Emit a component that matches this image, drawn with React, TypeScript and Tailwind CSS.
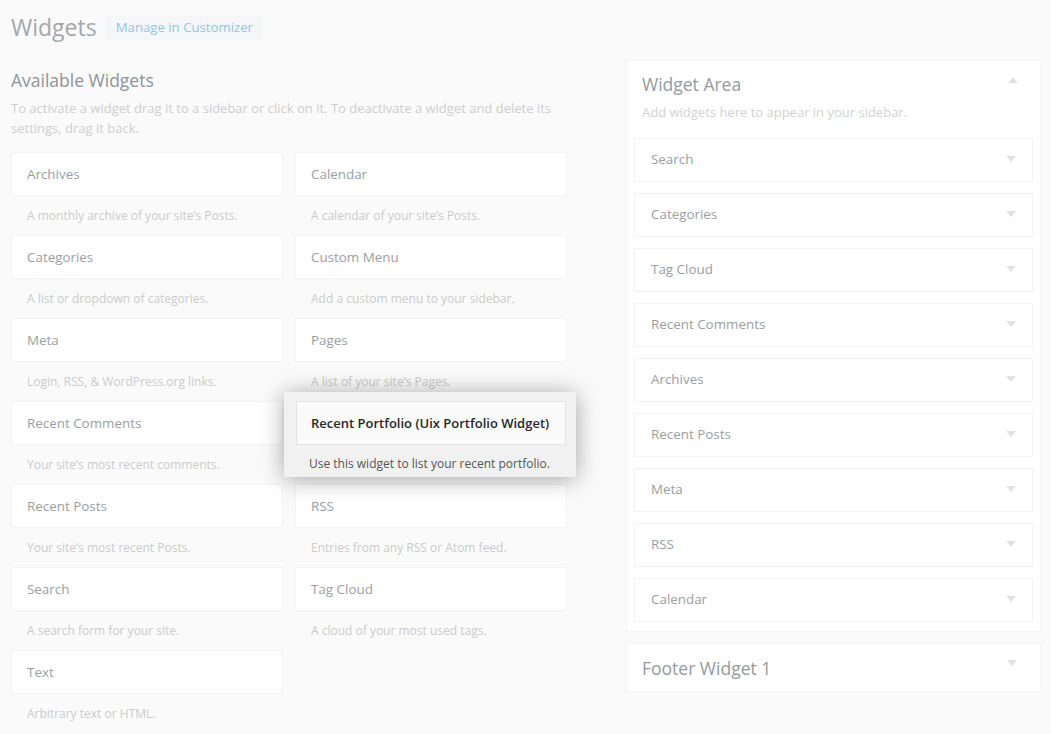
import React from "react";

const left: [string, string][] = [
  ["Archives", "A monthly archive of your site\u2019s Posts."],
  ["Calendar", "A calendar of your site\u2019s Posts."],
  ["Categories", "A list or dropdown of categories."],
  ["Custom Menu", "Add a custom menu to your sidebar."],
  ["Meta", "Login, RSS, & WordPress.org links."],
  ["Pages", "A list of your site\u2019s Pages."],
  ["Recent Comments", "Your site\u2019s most recent comments."],
  ["", ""],
  ["Recent Posts", "Your site\u2019s most recent Posts."],
  ["RSS", "Entries from any RSS or Atom feed."],
  ["Search", "A search form for your site."],
  ["Tag Cloud", "A cloud of your most used tags."],
  ["Text", "Arbitrary text or HTML."],
];

const area = ["Search", "Categories", "Tag Cloud", "Recent Comments", "Archives", "Recent Posts", "Meta", "RSS", "Calendar"];

function Down({ cls = "" }: { cls?: string }) {
  return (
    <svg width="10" height="6" viewBox="0 0 10 6" className={cls}>
      <path d="M0 0 L10 0 L5 6 Z" fill="#e2e2e2" />
    </svg>
  );
}
function Up({ cls = "" }: { cls?: string }) {
  return (
    <svg width="10" height="6" viewBox="0 0 10 6" className={cls}>
      <path d="M0 6 L10 6 L5 0 Z" fill="#e2e2e2" />
    </svg>
  );
}

export default function App() {
  return (
    <div className="relative min-h-[734px] w-[1051px] overflow-hidden bg-[#fafafa] font-['Open_Sans',sans-serif]">
      <div className="flex">
        <div className="ml-[11px] w-[556px] pt-[13px]">
          <div className="flex h-[29px] items-center">
            <h1 className="text-[23px] leading-[29px] text-[#a3a7ab]">Widgets</h1>
            <div className="ml-[10px] flex h-[26px] items-center bg-[#f4f6f7] px-[9px] text-[13.2px] text-[#92c7e3]">
              Manage in Customizer
            </div>
          </div>
          <h2 className="mt-[26px] text-[17.5px] leading-[24px] text-[#8f9499]">Available Widgets</h2>
          <p className="mt-[6px] text-[13px] leading-[20px] text-[#cfcfcf]">
            To activate a widget drag it to a sidebar or click on it. To deactivate a widget and delete its
            <br />
            settings, drag it back.
          </p>
          <div className="mt-[14px] grid grid-cols-2 gap-x-[12px]">
            {left.map(([t, d], i) => (
              <div key={i} className="h-[83px]">
                {t ? (
                  <>
                    <div className="flex h-[44px] items-center border border-[#f3f3f3] bg-white pl-[15px] pt-[1px] text-[13.4px] text-[#9a9ea2]">
                      {t}
                    </div>
                    <div className="pl-[16px] pt-[10px] text-[12px] leading-[20px] text-[#cbcbcb]">{d}</div>
                  </>
                ) : null}
              </div>
            ))}
          </div>
        </div>
        <div className="ml-[59px] mt-[60px] w-[415px]">
          <div className="border border-[#f3f3f3] bg-white px-[7px] pb-[9px] pt-[11px]">
            <div className="relative flex items-center pl-[8px]">
              <h3 className="text-[17.5px] leading-[24px] text-[#959a9f]">Widget Area</h3>
              <Up cls="absolute right-[15px] top-[5px]" />
            </div>
            <p className="mt-[6px] pl-[8px] text-[13px] leading-[20px] text-[#d2d2d2]">
              Add widgets here to appear in your sidebar.
            </p>
            <div className="mt-[16px] flex flex-col gap-[11px]">
              {area.map((a) => (
                <div
                  key={a}
                  className="flex h-[44px] items-center justify-between border border-[#f3f3f3] bg-white pb-[2px] pl-[16px] pr-[16px] text-[13.4px] text-[#9a9ea2]"
                >
                  <span>{a}</span>
                  <Down />
                </div>
              ))}
            </div>
          </div>
          <div className="relative mt-[11px] flex h-[49px] items-center border border-[#f3f3f3] bg-white pl-[15px]">
            <h3 className="text-[17.5px] leading-[24px] text-[#959a9f]">Footer Widget 1</h3>
            <Down cls="absolute right-[23px] top-[16px]" />
          </div>
        </div>
      </div>
      <div className="absolute left-[284px] top-[392px] h-[85px] w-[292px] bg-[#f1f1f1] pl-[12px] pr-[10px] pt-[9px] shadow-[0_2px_22px_rgba(0,0,0,0.35)]">
        <div className="flex h-[44px] items-center border border-[#e4e4e4] bg-[#fafafa] pl-[14px] pt-[2px] text-[13px] font-semibold text-[#23282d]">
          Recent Portfolio (Uix Portfolio Widget)
        </div>
        <div className="whitespace-nowrap pl-[13px] pt-[9px] text-[12px] leading-[20px] text-[#555]">
          Use this widget to list your recent portfolio.
        </div>
      </div>
    </div>
  );
}
